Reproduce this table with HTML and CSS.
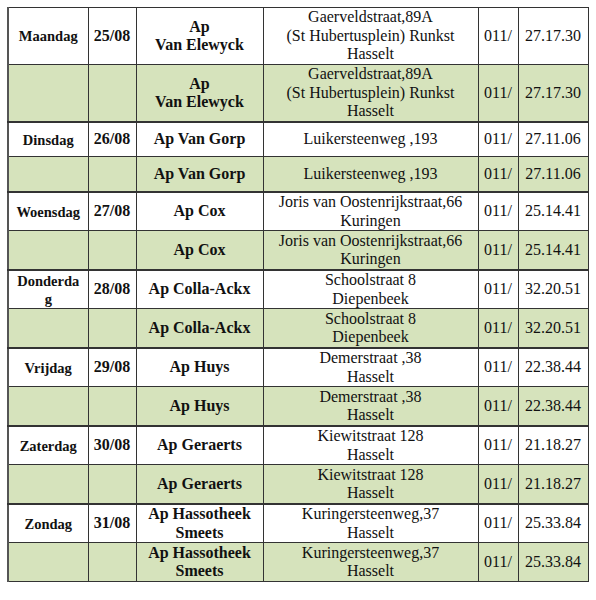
FILE: index.html
```html
<!DOCTYPE html>
<html lang="nl">
<head>
<meta charset="utf-8">
<title>Wachtdiensten apotheken</title>
<link rel="stylesheet" href="styles.css">
</head>
<body>
<table class="schedule">
  <colgroup>
    <col class="c-day"><col class="c-date"><col class="c-name"><col class="c-addr"><col class="c-zone"><col class="c-tel">
  </colgroup>
  <tbody>
    <tr class="main r3">
      <td class="day">Maandag</td><td class="date">25/08</td><td class="name">Ap<br>Van Elewyck</td>
      <td class="addr">Gaerveldstraat,89A<br>(St Hubertusplein) Runkst<br>Hasselt</td><td class="zone">011/</td><td class="tel">27.17.30</td>
    </tr>
    <tr class="alt r3">
      <td class="day"></td><td class="date"></td><td class="name">Ap<br>Van Elewyck</td>
      <td class="addr">Gaerveldstraat,89A<br>(St Hubertusplein) Runkst<br>Hasselt</td><td class="zone">011/</td><td class="tel">27.17.30</td>
    </tr>
    <tr class="main group r1">
      <td class="day">Dinsdag</td><td class="date">26/08</td><td class="name">Ap Van Gorp</td>
      <td class="addr">Luikersteenweg ,193</td><td class="zone">011/</td><td class="tel">27.11.06</td>
    </tr>
    <tr class="alt r1b">
      <td class="day"></td><td class="date"></td><td class="name">Ap Van Gorp</td>
      <td class="addr">Luikersteenweg ,193</td><td class="zone">011/</td><td class="tel">27.11.06</td>
    </tr>
    <tr class="main group">
      <td class="day">Woensdag</td><td class="date">27/08</td><td class="name">Ap Cox</td>
      <td class="addr">Joris van Oostenrijkstraat,66<br>Kuringen</td><td class="zone">011/</td><td class="tel">25.14.41</td>
    </tr>
    <tr class="alt">
      <td class="day"></td><td class="date"></td><td class="name">Ap Cox</td>
      <td class="addr">Joris van Oostenrijkstraat,66<br>Kuringen</td><td class="zone">011/</td><td class="tel">25.14.41</td>
    </tr>
    <tr class="main group">
      <td class="day">Donderdag</td><td class="date">28/08</td><td class="name">Ap Colla-Ackx</td>
      <td class="addr">Schoolstraat 8<br>Diepenbeek</td><td class="zone">011/</td><td class="tel">32.20.51</td>
    </tr>
    <tr class="alt">
      <td class="day"></td><td class="date"></td><td class="name">Ap Colla-Ackx</td>
      <td class="addr">Schoolstraat 8<br>Diepenbeek</td><td class="zone">011/</td><td class="tel">32.20.51</td>
    </tr>
    <tr class="main group">
      <td class="day">Vrijdag</td><td class="date">29/08</td><td class="name">Ap Huys</td>
      <td class="addr">Demerstraat ,38<br>Hasselt</td><td class="zone">011/</td><td class="tel">22.38.44</td>
    </tr>
    <tr class="alt">
      <td class="day"></td><td class="date"></td><td class="name">Ap Huys</td>
      <td class="addr">Demerstraat ,38<br>Hasselt</td><td class="zone">011/</td><td class="tel">22.38.44</td>
    </tr>
    <tr class="main group">
      <td class="day">Zaterdag</td><td class="date">30/08</td><td class="name">Ap Geraerts</td>
      <td class="addr">Kiewitstraat 128<br>Hasselt</td><td class="zone">011/</td><td class="tel">21.18.27</td>
    </tr>
    <tr class="alt">
      <td class="day"></td><td class="date"></td><td class="name">Ap Geraerts</td>
      <td class="addr">Kiewitstraat 128<br>Hasselt</td><td class="zone">011/</td><td class="tel">21.18.27</td>
    </tr>
    <tr class="main group">
      <td class="day">Zondag</td><td class="date">31/08</td><td class="name">Ap Hassotheek<br>Smeets</td>
      <td class="addr">Kuringersteenweg,37<br>Hasselt</td><td class="zone">011/</td><td class="tel">25.33.84</td>
    </tr>
    <tr class="alt">
      <td class="day"></td><td class="date"></td><td class="name">Ap Hassotheek<br>Smeets</td>
      <td class="addr">Kuringersteenweg,37<br>Hasselt</td><td class="zone">011/</td><td class="tel">25.33.84</td>
    </tr>
  </tbody>
</table>
</body>
</html>
```

FILE: styles.css
```css
html, body {
  margin: 0;
  padding: 0;
  background: #ffffff;
}

body {
  padding: 7px 0 0 7px;
  font-family: "Liberation Serif", "Times New Roman", serif;
  color: #111111;
}

.schedule {
  border-collapse: collapse;
  table-layout: fixed;
  width: 581px;
  border: 1px solid #555555;
  border-left-width: 2px;
}

.c-day { width: 80px; }
.c-date { width: 48px; }
.c-name { width: 127px; }
.c-addr { width: 215px; }
.c-zone { width: 40px; }
.c-tel { width: 70px; }

.schedule td {
  border: 1px solid #333333;
  padding: 0 6px;
  height: 38px;
  text-align: center;
  vertical-align: middle;
  font-size: 16px;
  line-height: 18.5px;
  white-space: nowrap;
  overflow: visible;
}

.schedule tr.group td {
  height: 37px;
  border-top: 2px solid #333333;
}

.schedule tr.r1 td {
  height: 33px;
}

.schedule tr.r1b td {
  height: 34px;
}

.schedule tr.r3 td {
  height: 56px;
}

.schedule tr.alt td {
  background: #d6e3bc;
}

.schedule td.day {
  font-weight: bold;
  font-size: 14.5px;
  line-height: 18px;
  white-space: normal;
  overflow-wrap: anywhere;
  padding: 0 7px;
}

.schedule td.date {
  font-weight: bold;
  padding: 0 2px;
}

.schedule td.name {
  font-weight: bold;
  padding: 0 2px;
}

.schedule td.addr {
  padding: 0 2px;
}

.schedule td.zone,
.schedule td.tel {
  padding: 0 2px;
}
```
